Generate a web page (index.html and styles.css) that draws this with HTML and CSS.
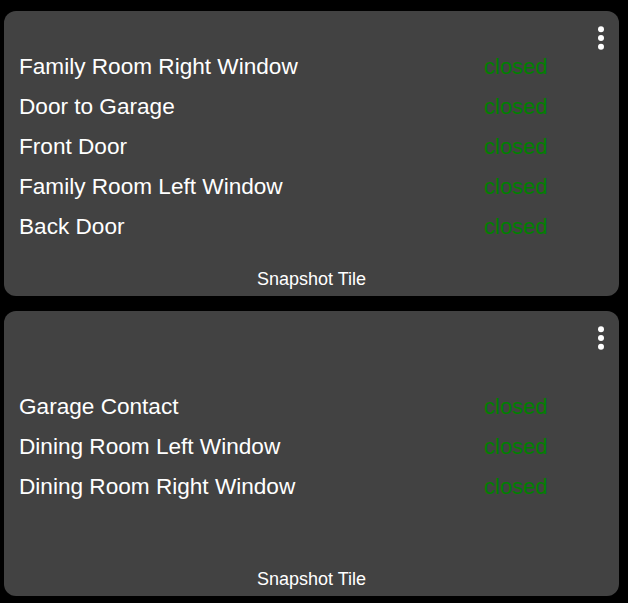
FILE: index.html
```html
<!DOCTYPE html>
<html>
<head>
<meta charset="utf-8">
<link rel="stylesheet" href="styles.css">
</head>
<body>
<div class="page">
  <div class="tile">
    <div class="menu"><svg viewBox="0 0 12 26" width="12" height="26"><circle cx="6" cy="3.2" r="3"/><circle cx="6" cy="12" r="3"/><circle cx="6" cy="20.8" r="3"/></svg></div>
    <div class="body">
      <div class="list">
        <div class="name">Family Room Right Window</div><div class="val">closed</div>
        <div class="name">Door to Garage</div><div class="val">closed</div>
        <div class="name">Front Door</div><div class="val">closed</div>
        <div class="name">Family Room Left Window</div><div class="val">closed</div>
        <div class="name">Back Door</div><div class="val">closed</div>
      </div>
    </div>
    <div class="title">Snapshot Tile</div>
  </div>
  <div class="tile">
    <div class="menu"><svg viewBox="0 0 12 26" width="12" height="26"><circle cx="6" cy="3.2" r="3"/><circle cx="6" cy="12" r="3"/><circle cx="6" cy="20.8" r="3"/></svg></div>
    <div class="body">
      <div class="list">
        <div class="name">Garage Contact</div><div class="val">closed</div>
        <div class="name">Dining Room Left Window</div><div class="val">closed</div>
        <div class="name">Dining Room Right Window</div><div class="val">closed</div>
      </div>
    </div>
    <div class="title">Snapshot Tile</div>
  </div>
</div>
</body>
</html>
```
FILE: styles.css
```css
html, body {
  margin: 0;
  padding: 0;
  background: #000;
}
body {
  font-family: "Liberation Sans", Arial, sans-serif;
  color: #fff;
}
.page {
  padding: 11px 9px 7px 4px;
  display: flex;
  flex-direction: column;
  gap: 15px;
}
.tile {
  position: relative;
  height: 285px;
  background: #424242;
  border-radius: 12px;
  display: flex;
  flex-direction: column;
}
.menu {
  position: absolute;
  top: 15px;
  right: 12px;
  width: 12px;
  height: 26px;
  fill: #fff;
}
.menu svg { display: block; }
.body {
  flex: 1;
  padding-top: 12px;
  display: flex;
  flex-direction: column;
  justify-content: center;
}
.list {
  display: grid;
  grid-template-columns: 465px auto;
  padding-left: 15px;
  font-size: 22px;
  line-height: 40px;
}
.name {
  font-size: 22.6px;
}
.val {
  color: #008000;
}
.title {
  text-align: center;
  font-size: 18px;
  line-height: 18px;
  padding-bottom: 8px;
}
```
